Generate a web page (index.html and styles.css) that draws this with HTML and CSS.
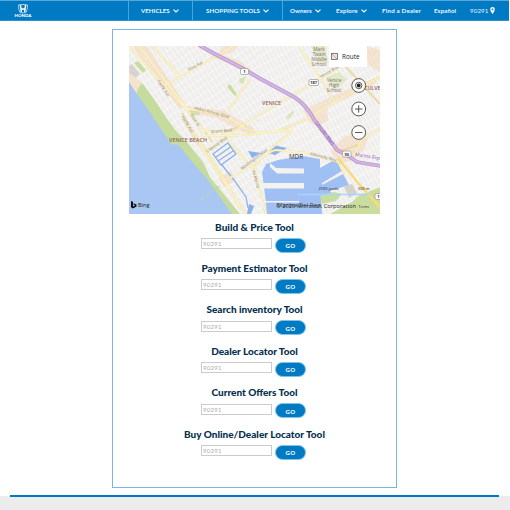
FILE: index.html
```html
<!DOCTYPE html>
<html lang="en">
<head>
<meta charset="utf-8">
<title>Honda Tools</title>
<link rel="stylesheet" href="styles.css">
</head>
<body>
<header class="nav">
  <a class="brand">
    <svg class="logo" viewBox="0 0 20 15"><path d="M5.2 1Q10 0 14.8 1Q15 6 13.2 9.2Q10 10 6.8 9.2Q5 6 5.2 1Z" fill="none" stroke="#fff" stroke-width=".7"/><path d="M6.5 1.2H8L8.5 4.5H11.5L12 1.2H13.5L12.5 8.7H11.2L11 6.2H9L8.8 8.7H7.5Z" fill="#fff"/><text x="1" y="14" textLength="18" lengthAdjust="spacingAndGlyphs">HONDA</text></svg>
  </a>
  <a class="item vehicles"><span>VEHICLES</span><svg class="chev" viewBox="0 0 6 4"><path d="M.5 .6L3 3L5.5 .6"/></svg></a>
  <a class="item shopping"><span>SHOPPING TOOLS</span><svg class="chev" viewBox="0 0 6 4"><path d="M.5 .6L3 3L5.5 .6"/></svg></a>
  <a class="item owners"><span>Owners</span><svg class="chev" viewBox="0 0 6 4"><path d="M.5 .6L3 3L5.5 .6"/></svg></a>
  <a class="item explore"><span>Explore</span><svg class="chev" viewBox="0 0 6 4"><path d="M.5 .6L3 3L5.5 .6"/></svg></a>
  <a class="item dealer"><span>Find a Dealer</span></a>
  <a class="item lang"><span>Español</span></a>
  <a class="item zip"><span>90291</span><svg class="pin" viewBox="0 0 5 7"><path fill-rule="evenodd" d="M2.5 0A2.3 2.3 0 0 1 4.8 2.4Q4.7 4 2.5 7Q.3 4 .2 2.4A2.3 2.3 0 0 1 2.5 0ZM2.5 1.5A.9 .9 0 1 0 2.5 3.3A.9 .9 0 1 0 2.5 1.5Z"/></svg></a>
</header>
<main class="panel">
  <svg class="map" viewBox="129 46 251 167.5" preserveAspectRatio="none">
    <defs>
      <pattern id="streets" width="7" height="4.5" patternUnits="userSpaceOnUse" patternTransform="rotate(57)"><path d="M0 .4H7M.4 0V4.5" stroke="#fafaf9" stroke-width=".8" fill="none"/></pattern>
      <pattern id="streets2" width="9" height="4" patternUnits="userSpaceOnUse" patternTransform="rotate(62)"><path d="M0 .4H9M.4 0V4" stroke="#fafaf9" stroke-width=".8" fill="none"/></pattern>
    </defs>
    <rect x="129" y="46" width="251" height="168" fill="#efeeec"/>
    <rect x="129" y="46" width="130" height="168" fill="url(#streets)"/>
    <rect x="259" y="46" width="121" height="168" fill="url(#streets2)"/>
    <g class="shops">
      <path d="M133 46L147 46L186 105L180 109L160 84Z"/>
      <path d="M210 50L225 56L241 61L252 72L242 71L228 63L212 57Z"/>
      <path d="M187 106L225 111L241 121L255 129L250 135L234 128L217 118L190 113Z"/>
      <path d="M303 110L333 96L353 87L377 77L376 83L343 100L327 107L328 121L317 126L309 122Z"/>
      <path d="M222 46H239L231 53L218 56Z"/>
      <path d="M330 151L344 137L355 134L368 138L365 148L352 161L340 164Z"/>
      <path d="M218 178L231 171L235 181L224 187Z"/>
      <path d="M366 46L380 50V72L368 65Z"/>
      <path d="M183 121L196 134L205 147L198 147Z"/>
    </g>
    <g fill="#cbdd9e">
      <path d="M134 63L138 61L146 70L143 73Z"/><path d="M227 87L230 84L237 94L235 96Z"/>
      <path d="M239 79L246 76L243 84L240 83Z" opacity=".7"/><path d="M286 117L293 110L294 113L288 120Z" opacity=".6"/>
      <path d="M326 77L340 72L347 80L334 91Z" opacity=".45"/><path d="M311 46H325L328 63L318 64Z" opacity=".45"/>
      <path d="M330 214L352 202L358 196L380 187V214Z"/>
      <path d="M189 111L199 109L200 115L192 116Z" opacity=".7"/>
    </g>
    <path d="M129 72L142 83L137 92L170 143L129 90Z" fill="#f5e3cb"/>
    <path d="M129 66L132 64L140 74L136 78L129 73Z" fill="#d8d3cf"/>
    <path d="M137 90L142 83L154 99L168 120L177 132L187 142L203 162L210 177L240 214H230L190 170L171 145L155 122L137 98Z" fill="#c6dc9e"/>
    <path d="M129 82L137 94L145 105L161 129L171 144L178 145L182 149L188 157L208 180L220 197L232 214H129Z" fill="#a9c7f2"/>
    <path d="M202 198L220 186" stroke="#b9d6ae" stroke-width="1" fill="none"/><circle cx="202" cy="198.500" r="1" fill="#c6dc9e"/>
    <g fill="none" stroke="#8eb2ec" stroke-width="1.300">
      <path d="M213 154L228 143L236 154L221 165ZM215.500 157.500L230.500 147M218 161L233 151M222 165L234 180L246 197L248 208"/>
    </g>
    <path d="M248 151L261 153L252 158ZM249 204L254 206L251 214H247ZM273 145L287 148L275 155L268 153Z" fill="#8eb2ec"/>
    <path d="M262 172L266 164L278 160L303 156L320 159V168L334 160L340 162L342 171L322 183V185L343 174L349 185L330 191L333 196L321 198L322 214H267L265 195Z" fill="#a0c0f3"/>
    <g fill="#f4f2ef"><path d="M270 163L276 168L304 168.500V173.500H277L270 167Z"/><path d="M262 183H304V188.500H262Z"/><path d="M258 201H299V202.500H258Z"/></g>
    <path d="M320 196L333 192L342 194L336 201L322 204Z" fill="#cbdd9e"/>
    <path class="road edge" d="M130 47L162 83L185 108L205 132L212 142M139 46L170 87L188 110M165 85L232 47M152 46L182 78M185 108L207 112L225 115L245 128L260 134M188 125L207 152L224 178L240 208M198 130L224 132L246 125M182 113L199 143L219 174L246 214M205 153L246 123L313 83L350 60M250 79L228 111M298 46L320 77L335 103M260 133L292 130M278 131L305 120L345 96L380 77M345 66L380 104M200 136L250 135L278 131M230 178L255 163L292 130M275 150L308 153L338 162L345 175M275 150Q255 158 255 172L266 214M338 152L360 144M352 160L362 139L380 128M226 138L255 171"/>
    <path class="road core" d="M130 47L162 83L185 108L205 132M139 46L170 87L188 110M165 85L232 47M152 46L182 78M185 108L207 112L225 115L245 128L260 134M188 125L207 152L224 178L240 208M198 130L224 132M199 143L219 174L246 214M205 153L246 123L313 83L350 60M298 46L320 77L335 103M260 133L292 130M250 79L228 111M278 131L305 120L345 96L380 77M200 136L250 135L278 131M230 178L255 163L292 130M275 150L308 153L338 162L345 175M275 150Q255 158 255 172L266 214M226 138L255 171M352 160L362 139L380 128"/>
    <path d="M338 158L358 183L380 207" fill="none" stroke="#f7dc7b" stroke-width="2.600"/>
    <path d="M199 45L213 53L242 68L259 78L294 97Q305 103 315 121L325 134L337 150L347 155L357 162L381 166" fill="none" stroke="#b997cf" stroke-width="3.800"/>
    <path d="M199 45L213 53L242 68L259 78L294 97Q305 103 315 121L325 134L337 150L347 155L357 162L381 166" fill="none" stroke="#d2b5e2" stroke-width="2.200"/>
    <path d="M344 187L352 184L357 193L349 198Z" fill="#d5d1cc"/>
    <g class="street">
      <text transform="translate(189 71) rotate(-29)" textLength="16" lengthAdjust="spacingAndGlyphs">Rose Ave</text>
      <text transform="translate(157 81) rotate(57)" textLength="19" lengthAdjust="spacingAndGlyphs">Pacific Ave</text>
      <text transform="translate(181 117) rotate(57)" textLength="19" lengthAdjust="spacingAndGlyphs">Pacific Ave</text>
      <text transform="translate(190 115) rotate(57)" textLength="14" lengthAdjust="spacingAndGlyphs">Main St</text>
      <text transform="translate(194 109) rotate(15)" textLength="36" lengthAdjust="spacingAndGlyphs">Abbot Kinney Blvd</text>
      <text transform="translate(211 133) rotate(-4)" textLength="21" lengthAdjust="spacingAndGlyphs">Grand Blvd</text>
      <text transform="translate(207 153) rotate(-35)" textLength="25" lengthAdjust="spacingAndGlyphs">S Venice Blvd</text>
      <text transform="translate(242 170) rotate(-37)" textLength="32" lengthAdjust="spacingAndGlyphs">Washington Blvd</text>
      <text transform="translate(321 78) rotate(-30)" textLength="21" lengthAdjust="spacingAndGlyphs">Venice Blvd</text>
      <text transform="translate(310 155) rotate(14)" textLength="27" lengthAdjust="spacingAndGlyphs">Admiralty Way</text>
      <text transform="translate(252 170) rotate(75)" textLength="19" lengthAdjust="spacingAndGlyphs">Via Marina</text>
      <text class="marina" transform="translate(315 123) rotate(53)" textLength="28" lengthAdjust="spacingAndGlyphs">Lincoln Blvd</text>
      <text class="marina" transform="translate(355 156) rotate(9)" textLength="25" lengthAdjust="spacingAndGlyphs">Marina Exp</text>
    </g>
    <g class="place">
      <text x="262" y="104.500" textLength="19" lengthAdjust="spacingAndGlyphs">VENICE</text><text x="169" y="142.300" textLength="38" lengthAdjust="spacingAndGlyphs">VENICE BEACH</text>
      <text x="364" y="90" textLength="20" lengthAdjust="spacingAndGlyphs">CULVER</text>
    </g>
    <g class="school">
      <text x="319" y="51">Mark</text><text x="319" y="56">Twain</text><text x="319" y="61">Middle</text><text x="319" y="66">School</text>
      <text x="334" y="81.500">Venice</text><text x="334" y="86.500">High</text><text x="334" y="91.500">School</text>
    </g>
    <g class="shield">
      <rect x="240.500" y="68.500" width="8" height="6" rx="1.500"/><text x="244.500" y="73.300">1</text>
      <rect x="309" y="79.500" width="9.500" height="6" rx="1.500"/><text x="313.700" y="84.300">187</text>
      <rect x="342.500" y="151" width="8.500" height="6" rx="1.500"/><text x="346.700" y="155.800">90</text>
      <rect x="375" y="193.500" width="9" height="6" rx="1.500"/><text x="378.500" y="198.300">1</text>
    </g>
    <text class="mdr" x="289" y="159" textLength="14" lengthAdjust="spacingAndGlyphs">MDR</text>
    <rect x="329" y="46" width="38" height="21" fill="#fff"/>
    <rect x="331.500" y="53.500" width="6" height="6" fill="#f0dfe5" stroke="#666" stroke-width=".8"/><path d="M332 54L337 59" stroke="#999" stroke-width=".6"/>
    <text class="route" x="342" y="58.800" textLength="17.500" lengthAdjust="spacingAndGlyphs">Route</text>
    <g fill="#fff" fill-opacity=".9" stroke="#444" stroke-width=".9">
      <circle cx="358.700" cy="85.500" r="6.900"/><circle cx="358.700" cy="109" r="6.900"/><circle cx="358.700" cy="132.500" r="6.900"/>
      <circle cx="358.700" cy="85.500" r="3.200"/><path d="M355 109H362.400M358.700 105.300V112.700M355 132.500H362.400"/>
    </g>
    <circle cx="358.700" cy="85.500" r="1.900" fill="#222"/>
    <path d="M131 201L133 201.700V206.500L135 205.400L133.700 204.800L133.200 203.200L136.500 204.600V206.400L132.900 208.500L131 207.300Z" fill="#111"/>
    <text class="bing" x="138" y="207.300" textLength="11.500" lengthAdjust="spacingAndGlyphs">Bing</text>
    <path d="M297 194.500H370" stroke="#a5d5fa" stroke-width="1.300"/>
    <text class="scale" x="318.500" y="190.300" textLength="20" lengthAdjust="spacingAndGlyphs">2500 yards</text><text class="scale" x="358" y="190.300" textLength="11.500" lengthAdjust="spacingAndGlyphs">500 m</text>
    <text class="bing dim" x="277" y="207.300" textLength="43" lengthAdjust="spacingAndGlyphs">Marina Del Rey</text>
    <text class="bing" x="276" y="207.800" textLength="80" lengthAdjust="spacingAndGlyphs">© 2020 Microsoft Corporation</text>
    <text class="scale" x="358.500" y="207.800" textLength="10.500" lengthAdjust="spacingAndGlyphs">Terms</text>
  </svg>
  <section class="tool"><h2>Build &amp; Price Tool</h2><form class="row"><input class="field" placeholder="90291"><button class="go" type="button">GO</button></form></section>
  <section class="tool"><h2>Payment Estimator Tool</h2><form class="row"><input class="field" placeholder="90291"><button class="go" type="button">GO</button></form></section>
  <section class="tool"><h2>Search inventory Tool</h2><form class="row"><input class="field" placeholder="90291"><button class="go" type="button">GO</button></form></section>
  <section class="tool"><h2>Dealer Locator Tool</h2><form class="row"><input class="field" placeholder="90291"><button class="go" type="button">GO</button></form></section>
  <section class="tool"><h2>Current Offers Tool</h2><form class="row"><input class="field" placeholder="90291"><button class="go" type="button">GO</button></form></section>
  <section class="tool"><h2>Buy Online/Dealer Locator Tool</h2><form class="row"><input class="field" placeholder="90291"><button class="go" type="button">GO</button></form></section>
</main>
<footer class="footer"><div class="rule"></div></footer>
</body>
</html>
```
FILE: styles.css
```css
* { box-sizing: border-box; }
body { margin: 0; width: 510px; height: 510px; overflow: hidden; background: #fff; font-family: Lato, "Open Sans", sans-serif; display: flex; flex-direction: column; }
.nav { width: 509px; height: 21px; flex: none; display: flex; background: #007ac2; border-top: 1px solid #58a9d8; border-bottom: 1px solid #2c91cc; color: #e9f6ff; }
.brand { width: 128px; padding: 3px 0 0 13px; }
.logo { display: block; width: 20px; height: 14px; }
.logo text { font: 900 4.2px Lato, sans-serif; fill: #fff; }
.item { display: flex; align-items: center; gap: 3px; font-weight: 700; font-size: 6.2px; white-space: nowrap; }
.vehicles { width: 64px; padding-left: 12px; border-left: 1px solid #4ba3d6; }
.shopping { width: 90px; padding-left: 13px; border-left: 1px solid #4ba3d6; letter-spacing: .04px; }
.owners { width: 54px; padding-left: 7px; border-left: 1px solid #4ba3d6; }
.explore { width: 46px; letter-spacing: .12px; }
.dealer { width: 52px; letter-spacing: .19px; }
.lang { width: 36px; letter-spacing: .1px; }
.zip { gap: 2px; font-weight: 400; letter-spacing: .1px; }
.chev { width: 6px; height: 4px; fill: none; stroke: #fff; stroke-width: 1.2; }
.pin { width: 5px; height: 7px; fill: #fff; }
.panel { width: 285px; height: 459px; flex: none; margin: 8px 0 0 112px; padding: 16px; border: 1px solid #75b9de; }
.map { display: block; width: 251px; height: 167.5px; margin-bottom: 7px; }
.map text { font-family: "Open Sans", sans-serif; }
.shops path { fill: #f8d3b1; opacity: .5; }
.road { fill: none; stroke-linejoin: round; }
.edge { stroke: #eadca9; stroke-width: 2; }
.core { stroke: #fcf5c6; stroke-width: 1.3; }
.map .street text { font-size: 4.2px; fill: #8c867d; }
.map .street .marina { font-size: 5px; fill: #8e5cab; }
.map .place text { font-size: 5px; fill: #92655f; font-weight: 600; }
.map .school text { font-size: 4.8px; fill: #84716d; text-anchor: middle; }
.shield rect { fill: #fff; stroke: #888; stroke-width: .6; }
.map .shield text { font-size: 4px; font-weight: 700; fill: #333; text-anchor: middle; }
.map .mdr { font-size: 6.5px; fill: #333; }
.map .route { font-size: 6.7px; fill: #222; }
.map .bing { font-size: 6px; fill: #222; }
.map .dim { fill: #444; }
.map .scale { font-size: 4px; fill: #222; }
.tool { height: 41.45px; }
.tool h2 { margin: 0; height: 16px; line-height: 13px; text-align: center; font-size: 10px; font-weight: 900; color: #062f50; white-space: nowrap; }
.row { display: flex; margin: 0; padding-left: 72px; gap: 3px; }
.field { width: 71px; height: 11px; margin-top: 1.5px; padding: 0 1px; border: 1px solid #ccc; background: #fff; font: 6px Lato, sans-serif; letter-spacing: .3px; outline: 0; }
.field::placeholder { color: #aaa; opacity: 1; }
.go { width: 31px; height: 15px; margin-top: 1px; padding: 1px 0 0; border: 1px solid #7fc4e8; border-radius: 8px; background: #007ac2; color: #fff; font: 900 6px Lato, sans-serif; letter-spacing: .4px; }
.footer { flex: 1; margin-top: 7px; padding: 0 11px 0 10px; background: linear-gradient(#fff 1px, #ececec 1px); }
.rule { height: 2px; background: #007ac2; }
```
